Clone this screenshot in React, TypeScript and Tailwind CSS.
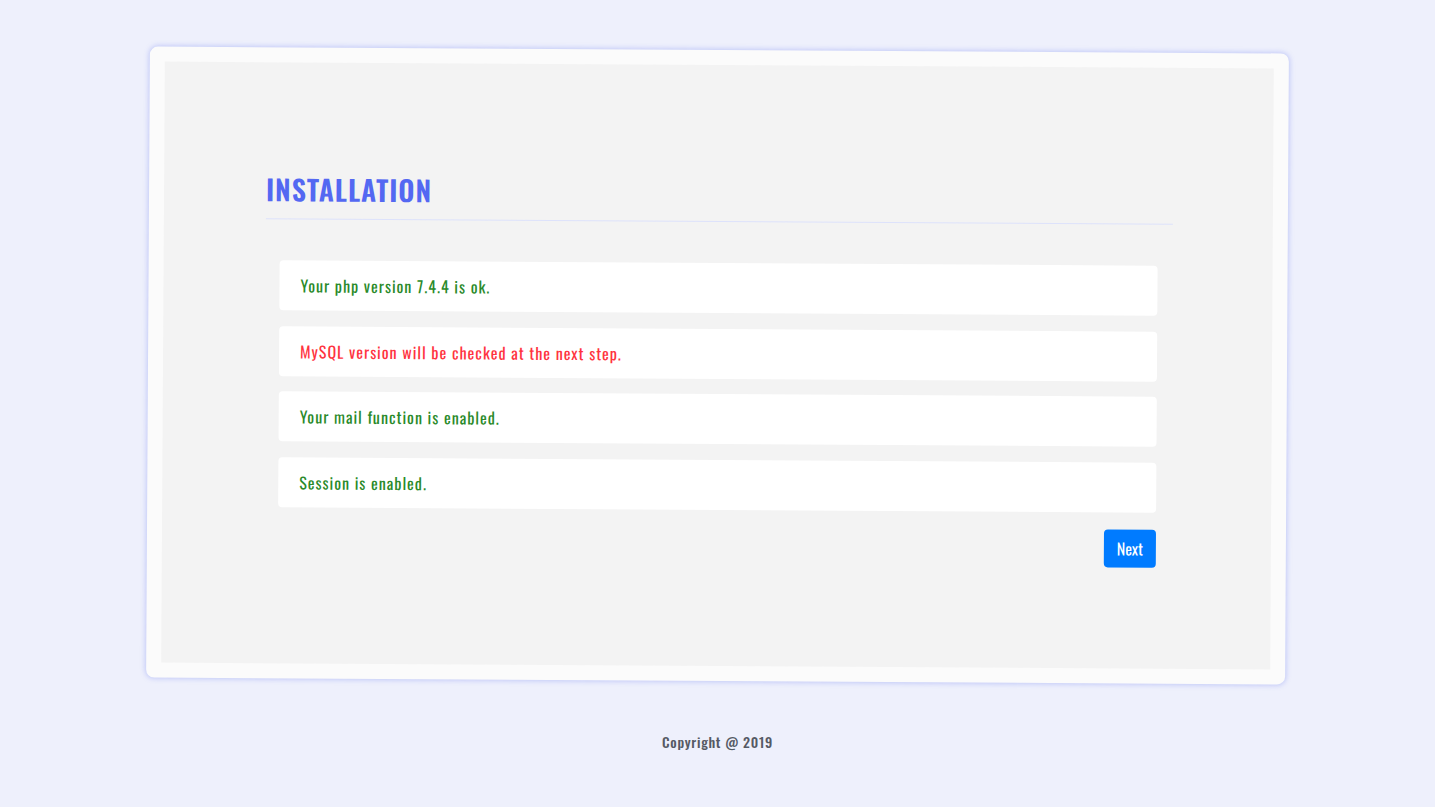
import React from 'react';

const checks = [
  { text: 'Your php version 7.4.4 is ok.', ok: true },
  { text: 'MySQL version will be checked at the next step.', ok: false },
  { text: 'Your mail function is enabled.', ok: true },
  { text: 'Session is enabled.', ok: true },
];

const font = { fontFamily: '"Oswald", "Liberation Sans Narrow", "DejaVu Sans Condensed", sans-serif' };

const App: React.FC = () => {
  return (
    <div className="min-h-[807px] bg-[#eef0fc] pt-[50px]" style={font}>
      <div className="mx-auto w-[1139px] rotate-[0.35deg] rounded-lg bg-[#fbfbfb] p-[15px] shadow-[0_0_5px_1px_rgba(110,125,240,0.35)]">
        <div className="bg-[#f3f3f3] pl-[102px] pr-[100px] pt-[106px] pb-[101px]">
          <h1 className="border-b border-[#dde2fb] pt-[1px] pb-[9px] text-[28px] font-semibold leading-[40px] tracking-[1px] text-[#5468f2]">
            INSTALLATION
          </h1>
          <div className="ml-[14px] mr-[15px] mt-[41px] flex flex-col gap-[15.5px]">
            {checks.map((c) => (
              <div
                key={c.text}
                className={`flex h-[50px] items-center rounded bg-white px-[21px] text-[16px] tracking-[1px] ${
                  c.ok ? 'text-[#2a8a2a]' : 'text-[#ff3340]'
                }`}
              >
                {c.text}
              </div>
            ))}
            <div className="mt-[1.5px] flex justify-end">
              <button className="h-[38px] w-[52px] rounded bg-[#007bff] text-[16px] text-white">Next</button>
            </div>
          </div>
        </div>
      </div>
      <p className="mt-[50px] text-center text-[14px] font-medium tracking-[0.7px] text-[#555a64]">Copyright @ 2019</p>
    </div>
  );
};

export default App;
